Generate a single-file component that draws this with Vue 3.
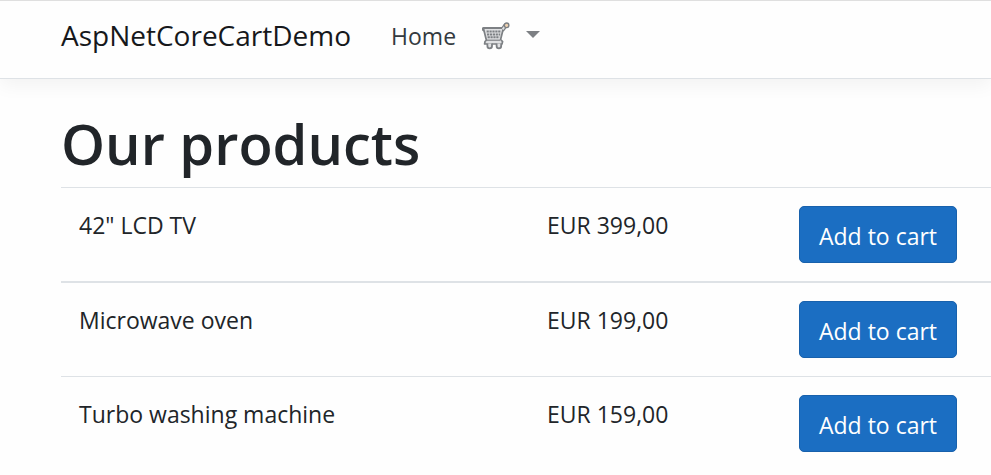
<script setup>
const products = [
  { id: 1, name: '42" LCD TV', price: 'EUR 399,00' },
  { id: 2, name: 'Microwave oven', price: 'EUR 199,00' },
  { id: 3, name: 'Turbo washing machine', price: 'EUR 159,00' },
]
</script>

<template>
  <div class="page">
    <header>
      <nav class="navbar">
        <a class="brand" href="#">AspNetCoreCartDemo</a>
        <a class="link" href="#">Home</a>
        <button class="cart" type="button" aria-label="Cart">
          <svg class="cart-icon" viewBox="0 0 28 28" width="28" height="28" aria-hidden="true">
            <path d="M2 7.2H20.8L23.6 3.4" fill="none" stroke="#7d8084" stroke-width="4.4" stroke-linecap="round" stroke-linejoin="round" />
            <path d="M1.4 6.2H21.4L18.6 17.5L20.6 19.6L20 22H2.6L3 19.5L4.4 18.2Z" fill="#e0e1e3" stroke="#7d8084" stroke-width="1.7" stroke-linejoin="round" />
            <path d="M20.6 7.4L23.6 3.4" fill="none" stroke="#e0e1e3" stroke-width="1.8" />
            <circle cx="24.6" cy="3.3" r="2.3" fill="#f0d3b2" stroke="#7d8084" stroke-width="1.4" />
            <path d="M4.6 9.4H19M5 12.4H18.2M5.6 15.2H17.4" fill="none" stroke="#7d8084" stroke-width="2" stroke-dasharray="2.2 .7" />
            <path d="M4.6 18.2H18" stroke="#7d8084" stroke-width="1.2" />
            <path d="M5.4 21.6V24A2.3 2.3 0 0 0 10 24V21.6M14.6 21.6V24A2.3 2.3 0 0 0 19.2 24V21.6" fill="#e0e1e3" stroke="#7d8084" stroke-width="1.8" />
          </svg>
          <svg class="caret" viewBox="0 0 14 7" width="14" height="7" aria-hidden="true">
            <path d="M0 0H14L7 7Z" fill="#7d8084" />
          </svg>
        </button>
      </nav>
    </header>
    <main>
      <h1>Our products</h1>
      <table>
        <colgroup>
          <col class="col-name" />
          <col class="col-price" />
          <col />
        </colgroup>
        <tbody>
          <tr v-for="product in products" :key="product.id">
            <td>{{ product.name }}</td>
            <td>{{ product.price }}</td>
            <td><button class="add" type="button">Add to cart</button></td>
          </tr>
        </tbody>
      </table>
    </main>
  </div>
</template>

<style>
body {
  background: #fefefe;
}
</style>

<style scoped>
.page {
  font-family: "Segoe UI", "Open Sans", "Noto Sans", sans-serif;
  font-size: 23px;
  line-height: 36px;
  color: #212529;
  overflow-x: hidden;
}
.navbar {
  display: flex;
  align-items: center;
  padding: 12px 16px 20px 61px;
  border-top: 1px solid #dfdfdf;
  border-bottom: 1px solid #dee2e6;
  box-shadow: 0 6px 18px rgba(0, 0, 0, 0.05);
}
a {
  text-decoration: none;
}
.brand {
  margin-right: 40px;
  font-size: 28px;
  line-height: 45px;
  color: #16181b;
}
.link {
  margin-right: 26px;
  color: #343a40;
}
.cart {
  display: flex;
  align-items: center;
  gap: 16px;
  padding: 0;
  border: 0;
  background: none;
}
.cart-icon,
.caret {
  display: block;
}
.caret {
  margin-bottom: 2px;
}
main {
  padding: 28px 0 0 61px;
}
h1 {
  margin: 0 0 8px;
  font-size: 56px;
  font-weight: 600;
  line-height: 72px;
}
table {
  width: 100%;
  table-layout: fixed;
  border-spacing: 0;
}
.col-name {
  width: 468px;
}
.col-price {
  width: 252px;
}
td {
  padding: 18px;
  border-top: 1px solid #dee2e6;
  text-align: left;
  vertical-align: top;
  line-height: 38px;
}
tr:nth-child(2) td {
  border-top-width: 2px;
}
.add {
  display: block;
  padding: 12px 19px 8px;
  border: 1px solid #1861ac;
  border-radius: 5px;
  background: #1b6ec2;
  color: #fff;
  font-family: inherit;
  font-size: 23px;
  line-height: 35px;
  white-space: nowrap;
}
</style>
